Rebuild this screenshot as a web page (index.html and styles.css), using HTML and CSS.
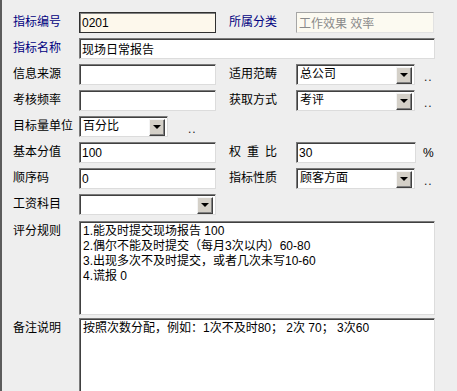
FILE: index.html
```html
<!DOCTYPE html>
<html lang="zh-CN">
  <head>
    <meta charset="UTF-8" />
    <meta name="viewport" content="width=device-width, initial-scale=1.0" />
    <title>指标设置</title>
    <link rel="stylesheet" href="styles.css">
  </head>
  <body>
    <form class="sheet">
      <div class="row">
        <label class="lbl key">指标编号</label>
        <input class="field key-field w137" type="text" value="0201" />
        <label class="lbl key side">所属分类</label>
        <input class="field ro w138" type="text" value="工作效果 效率" readonly />
      </div>

      <div class="row">
        <label class="lbl key">指标名称</label>
        <input class="field wide" type="text" value="现场日常报告" />
      </div>

      <div class="row">
        <label class="lbl">信息来源</label>
        <input class="field w137" type="text" value="" />
        <label class="lbl side">适用范畴</label>
        <div class="select w119"><span>总公司</span><i class="arrow"></i></div>
        <span class="more">..</span>
      </div>

      <div class="row">
        <label class="lbl">考核频率</label>
        <input class="field w137" type="text" value="" />
        <label class="lbl side">获取方式</label>
        <div class="select w119"><span>考评</span><i class="arrow"></i></div>
        <span class="more">..</span>
      </div>

      <div class="row">
        <label class="lbl">目标量单位</label>
        <div class="select w89"><span>百分比</span><i class="arrow"></i></div>
        <span class="more far">..</span>
      </div>

      <div class="row">
        <label class="lbl">基本分值</label>
        <input class="field w137" type="text" value="100" />
        <label class="lbl side"><span class="spread">权 重 比</span></label>
        <input class="field w120" type="text" value="30" />
        <span class="unit">%</span>
      </div>

      <div class="row">
        <label class="lbl">顺序码</label>
        <input class="field w137" type="text" value="0" />
        <label class="lbl side">指标性质</label>
        <div class="select w119"><span>顾客方面</span><i class="arrow"></i></div>
        <span class="more">..</span>
      </div>

      <div class="row">
        <label class="lbl">工资科目</label>
        <div class="select w137"><span></span><i class="arrow"></i></div>
      </div>

      <div class="row area">
        <label class="lbl">评分规则</label>
        <textarea class="field memo rules">1.能及时提交现场报告 100
2.偶尔不能及时提交（每月3次以内）60-80
3.出现多次不及时提交，或者几次未写10-60
4.谎报 0</textarea>
      </div>

      <div class="row area">
        <label class="lbl">备注说明</label>
        <textarea class="field memo notes">按照次数分配，例如：1次不及时80； 2次 70； 3次60</textarea>
      </div>
    </form>
  </body>
</html>
```

FILE: styles.css
```css
body {
  margin: 0;
  background: #eeeeee;
  color: #000;
  font-family: "Liberation Sans", "Noto Sans CJK SC", sans-serif;
  font-size: 12px;
}

.sheet {
  height: 391px;
  box-sizing: border-box;
  overflow: hidden;
  border-left: 2px solid #5c5c5c;
  padding: 12px 0 0 11px;
  background: #eeeeee;
}

.row {
  display: flex;
  align-items: center;
  height: 21px;
  margin-bottom: 5px;
}

.row.area {
  align-items: flex-start;
  height: auto;
  margin-bottom: 3px;
}
.row.area:first-of-type,
.row:nth-child(8) {
  margin-bottom: 6px;
}

.lbl {
  width: 66px;
  flex: none;
  line-height: 15px;
  white-space: nowrap;
}
.lbl.key {
  color: #000080;
}
.lbl.side {
  margin-left: 13px;
  width: 67px;
}
.row.area .lbl {
  padding-top: 3px;
}

.spread {
  display: inline-block;
  width: 48px;
  text-align: justify;
  text-align-last: justify;
}

.field {
  box-sizing: border-box;
  height: 21px;
  margin: 0;
  padding: 0 2px;
  font: inherit;
  color: #000;
  background: #fff;
  border: 1px solid;
  border-color: #7a7a7a #dcdcdc #dcdcdc #7a7a7a;
  box-shadow: inset 1px 1px #404040;
  outline: none;
}
.key-field {
  background: #fdf8ec;
  border-color: #303030;
  box-shadow: inset 1px 1px #808080;
}
.ro {
  background: #fcfaf1;
  color: #8a8a8a;
  border-color: #a6a6a6 #e2e2e2 #e2e2e2 #a6a6a6;
  box-shadow: none;
}

.w89 { width: 89px; }
.w119 { width: 119px; }
.w120 { width: 120px; }
.w137 { width: 137px; }
.w138 { width: 138px; }
.wide { width: 356px; }

.select {
  box-sizing: border-box;
  height: 21px;
  display: flex;
  align-items: center;
  justify-content: space-between;
  padding: 0 2px 0 2px;
  background: #fff;
  border: 1px solid;
  border-color: #7a7a7a #dcdcdc #dcdcdc #7a7a7a;
  box-shadow: inset 1px 1px #404040;
}
.select span {
  padding-left: 1px;
  line-height: 15px;
}

.arrow {
  box-sizing: border-box;
  width: 16px;
  height: 17px;
  margin-top: 1px;
  position: relative;
  background: #d4d0c8;
  border: 1px solid;
  border-color: #f4f4f4 #404040 #404040 #f4f4f4;
  box-shadow: inset -1px -1px #808080;
}
.arrow::after {
  content: "";
  position: absolute;
  left: 3px;
  top: 5px;
  border-left: 4px solid transparent;
  border-right: 4px solid transparent;
  border-top: 4px solid #000;
}

.more {
  margin-left: 9px;
  padding-top: 4px;
  color: #222;
  letter-spacing: 1px;
}
.more.far {
  margin-left: 20px;
}

.unit {
  margin-left: 7px;
}

.memo {
  display: block;
  width: 356px;
  height: 94px;
  padding: 2px 3px;
  line-height: 15px;
  resize: none;
  overflow: hidden;
  white-space: pre-wrap;
}
.notes {
  height: 110px;
}
```
